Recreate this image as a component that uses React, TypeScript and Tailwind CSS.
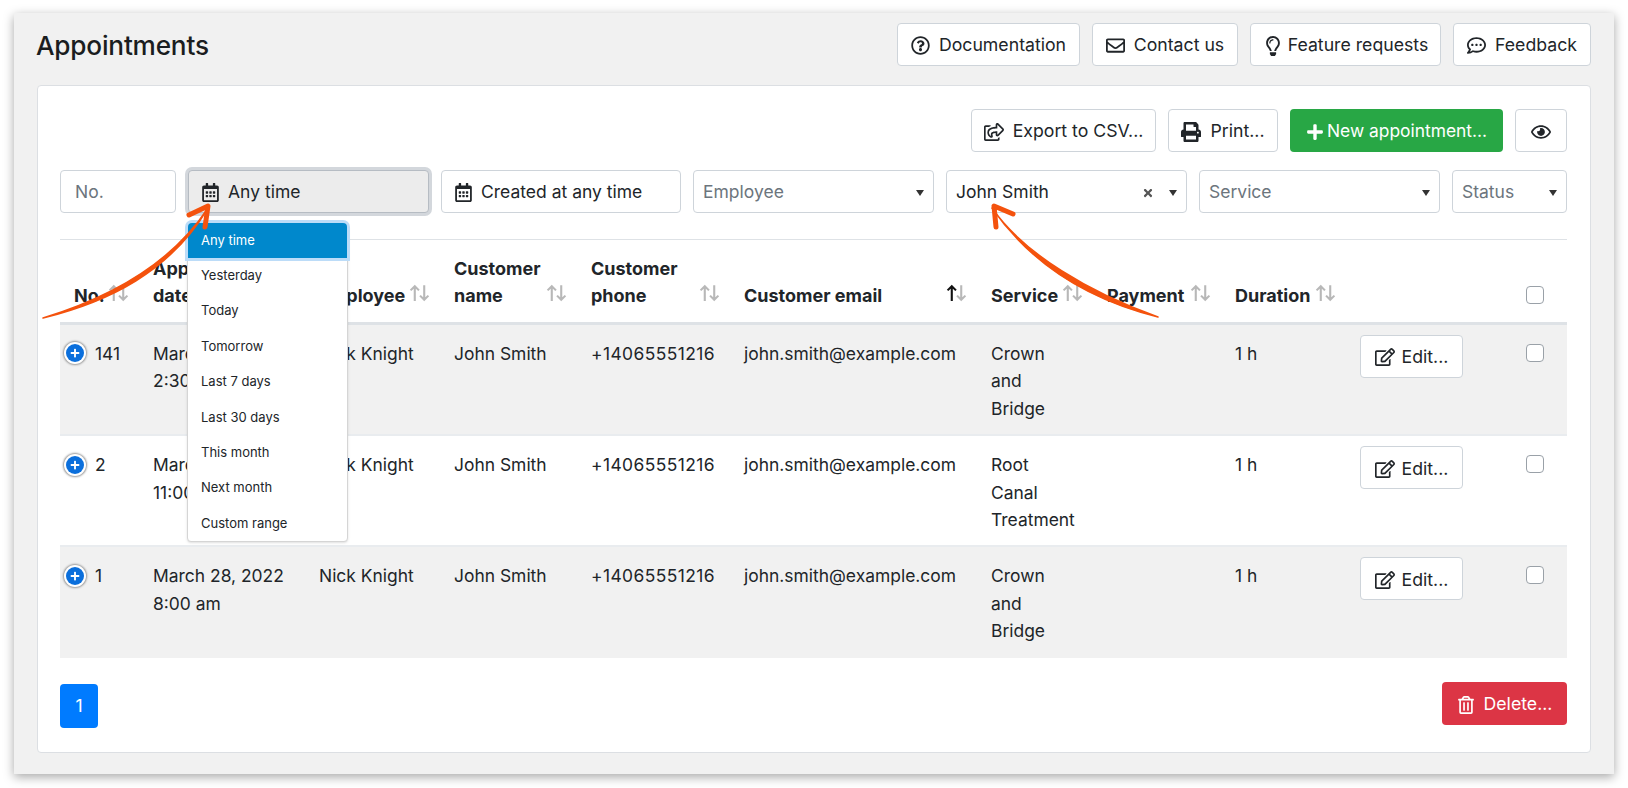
import { FaPlus, FaPrint, FaRegCalendarAlt, FaRegCommentDots, FaRegEdit, FaRegEnvelope, FaRegEye, FaRegLightbulb, FaRegQuestionCircle, FaRegShareSquare, FaRegTrashAlt, FaTimes } from "react-icons/fa";
import { type ReactNode } from "react";

const btn = "flex items-center justify-center gap-[9px] rounded-[4px] border border-[#ced4da] bg-white pt-[2px] text-[17.7px] text-[#212529]";
const select = "flex h-[43px] items-center rounded-[4px] border border-[#ced4da] bg-white pl-[9px] pr-[9px] pt-[2px] text-[17.5px]";

function SortIcon({ active }: { active?: boolean }) {
  return (
    <svg viewBox="0 0 20 17" className="mb-[8px] h-[18px] w-[21px] shrink-0" fill="none" strokeWidth="2">
      <path d="M5.5 16V2M1.5 6l4-4 4 4" stroke={active ? "#111" : "#b8b8b8"} />
      <path d="M14.5 1v14M10.5 11l4 4 4-4" stroke="#b8b8b8" />
    </svg>
  );
}

function Caret() {
  return <span className="ml-auto h-0 w-0 border-x-[4.5px] border-t-[6px] border-x-transparent border-t-[#333]" />;
}

function Th({ children, active }: { children: ReactNode; active?: boolean }) {
  return (
    <th className="pb-[12px] pl-[14px] pr-[10px] text-left align-bottom font-bold">
      <div className="flex items-end justify-between">
        <span>{children}</span>
        <SortIcon active={active} />
      </div>
    </th>
  );
}

const rows = [
  { no: "141", date: ["March 28, 2022", "2:30 pm"], service: ["Crown", "and", "Bridge"], bg: "bg-[#f1f1f1] h-[112px] border-b-2" },
  { no: "2", date: ["March 28, 2022", "11:00 am"], service: ["Root", "Canal", "Treatment"], bg: "bg-white h-[111px] border-b-2" },
  { no: "1", date: ["March 28, 2022", "8:00 am"], service: ["Crown", "and", "Bridge"], bg: "bg-[#f1f1f1] h-[112px]" },
];

const ranges = ["Yesterday", "Today", "Tomorrow", "Last 7 days", "Last 30 days", "This month", "Next month", "Custom range"];

export default function App() {
  return (
    <div className="relative h-[788px] w-[1628px] overflow-hidden bg-white pl-[14px] pt-[13px] font-['Inter','Liberation_Sans',sans-serif] text-[#212529]">
      <div className="h-[761px] w-[1600px] bg-[#f1f1f1] px-[23px] pt-[10px] shadow-[0_3px_10px_rgba(0,0,0,0.35)]">
        <div className="flex h-[43px] items-center">
          <h1 className="-ml-px pt-[2px] text-[26.2px] font-medium tracking-[-0.2px] text-[#1a1d20]">Appointments</h1>
          <div className="ml-auto flex gap-3">
            <button className={`${btn} h-[43px] w-[183px]`}><FaRegQuestionCircle className="text-[19px]" />Documentation</button>
            <button className={`${btn} h-[43px] w-[146px]`}><FaRegEnvelope className="text-[19px]" />Contact us</button>
            <button className={`${btn} h-[43px] w-[191px] !gap-[5px]`}><FaRegLightbulb className="text-[20px]" />Feature requests</button>
            <button className={`${btn} h-[43px] w-[138px]`}><FaRegCommentDots className="text-[19px]" />Feedback</button>
          </div>
        </div>

        <div className="mt-[19px] h-[668px] rounded-[4px] border border-[#dcdfe3] bg-white pl-[22px] pr-[23px] pt-[23px]">
          <div className="flex justify-end gap-3">
            <button className={`${btn} h-[43px] w-[185px]`}><FaRegShareSquare className="text-[20px]" />Export to CSV...</button>
            <button className={`${btn} h-[43px] w-[110px]`}><FaPrint className="text-[20px]" />Print...</button>
            <button className="flex h-[43px] w-[213px] items-center justify-center gap-[3px] rounded-[4px] bg-[#28a745] pt-[2px] text-[17.4px] text-white"><FaPlus className="text-[18px]" />New appointment...</button>
            <button className={`${btn} h-[43px] w-[52px]`}><FaRegEye className="text-[20px]" /></button>
          </div>

          <div className="mt-[18px] flex gap-3">
            <div className={`${select} w-[116px] !pl-[14px] text-[#6c757d]`}>No.</div>
            <div className="flex h-[43px] w-[241px] items-center gap-[8px] rounded-[4px] border border-[#b6bcc3] bg-[#ececec] px-[12px] pt-[2px] text-[17.5px] shadow-[0_0_0_3px_#d3d7dc]"><FaRegCalendarAlt className="text-[19px]" />Any time</div>
            <div className={`${select} w-[240px] gap-[8px] !pl-[12px]`}><FaRegCalendarAlt className="text-[19px]" />Created at any time</div>
            <div className={`${select} w-[241px] text-[#6c757d]`}>Employee<Caret /></div>
            <div className={`${select} w-[241px]`}>John Smith<FaTimes className="ml-auto mr-[15px] text-[12px] text-[#555]" /><span className="h-0 w-0 border-x-[4.5px] border-t-[6px] border-x-transparent border-t-[#333]" /></div>
            <div className={`${select} w-[241px] text-[#6c757d]`}>Service<Caret /></div>
            <div className={`${select} w-[115px] text-[#6c757d]`}>Status<Caret /></div>
          </div>

          <hr className="mt-[26px] border-[#dee2e6]" />

          <table className="w-[1507px] table-fixed border-collapse text-[17.45px] leading-[27.5px]">
            <colgroup>
              <col className="w-[79px]" />
              <col className="w-[166px]" />
              <col className="w-[135px]" />
              <col className="w-[137px]" />
              <col className="w-[153px]" />
              <col className="w-[247px]" />
              <col className="w-[116px]" />
              <col className="w-[128px]" />
              <col className="w-[125px]" />
              <col className="w-[221px]" />
            </colgroup>
            <thead className="text-[18px]">
              <tr className="h-[83px] border-b-[3px] border-[#dee2e6]">
                <Th>No.</Th>
                <Th>Appointment date</Th>
                <Th>Employee</Th>
                <Th>Customer name</Th>
                <Th>Customer phone</Th>
                <Th active>Customer email</Th>
                <Th>Service</Th>
                <Th>Payment</Th>
                <Th>Duration</Th>
                <th className="pb-[18px] pr-[23px] text-right align-bottom">
                  <span className="ml-auto block h-[18px] w-[18px] rounded-[4px] border border-[#9aa1a8] bg-white" />
                </th>
              </tr>
            </thead>
            <tbody>
              {rows.map((r) => (
                <tr key={r.no} className={`border-[#e9ecef] align-top ${r.bg}`}>
                  <td className="pt-[15px]">
                    <div className="flex items-center gap-[11px] pl-[6px]">
                      <span className="flex h-[18px] w-[18px] shrink-0 items-center justify-center rounded-full bg-[#0b6fdc] text-white shadow-[0_0_0_2px_#fff,0_0_2px_3px_#999]"><FaPlus className="text-[10px]" /></span>
                      {r.no}
                    </div>
                  </td>
                  <td className="px-[14px] pt-[15px]">{r.date[0]}<br />{r.date[1]}</td>
                  <td className="px-[14px] pt-[15px]">Nick Knight</td>
                  <td className="px-[14px] pt-[15px]">John Smith</td>
                  <td className="px-[14px] pt-[15px] tracking-[0.4px]">+14065551216</td>
                  <td className="px-[14px] pt-[15px]">john.smith@example.com</td>
                  <td className="px-[14px] pt-[15px]">{r.service[0]}<br />{r.service[1]}<br />{r.service[2]}</td>
                  <td />
                  <td className="px-[14px] pt-[15px]">1 h</td>
                  <td className="pl-[14px] pt-[10px]">
                    <div className="flex items-start justify-between pr-[23px]">
                      <button className={`${btn} h-[43px] w-[103px] !gap-[7px]`}><FaRegEdit className="text-[20px]" />Edit...</button>
                      <span className="mt-[9px] h-[18px] w-[18px] rounded-[4px] border border-[#9aa1a8] bg-white" />
                    </div>
                  </td>
                </tr>
              ))}
            </tbody>
          </table>

          <div className="mt-[24px] flex items-start justify-between">
            <span className="mt-[2px] flex h-[44px] w-[38px] items-center justify-center rounded-[4px] bg-[#007bff] text-[17.5px] text-white">1</span>
            <button className="flex h-[43px] w-[125px] items-center justify-center gap-[9px] rounded-[4px] bg-[#dc3545] pt-[2px] text-[17.7px] text-white"><FaRegTrashAlt className="text-[18px]" />Delete...</button>
          </div>
        </div>
      </div>

      {/* date range dropdown */}
      <div className="absolute left-[187px] top-[222px] w-[161px] rounded-[4px] border border-[#d5d5d5] bg-white text-[13px] shadow-sm">
        <div className="flex h-[35px] items-center rounded-t-[4px] bg-[#0088cc] pl-[13px] text-white shadow-[0_0_0_3px_#bcdcf8]">Any time</div>
        {ranges.map((r) => (
          <div key={r} className="flex h-[35.4px] items-center pl-[13px]">{r}</div>
        ))}
      </div>

      {/* annotation arrows */}
      <svg className="pointer-events-none absolute inset-0" width="1628" height="788" viewBox="0 0 1628 788" fill="none">
        <path d="M43 318C108 302 170 272 208 208C170 266 105 299 43 318Z" fill="#f4520d" stroke="#f4520d" strokeWidth="1.5" strokeLinejoin="round" />
        <path d="M189 215 208 206 205 227" stroke="#f4520d" strokeWidth="5" strokeLinecap="round" strokeLinejoin="round" />
        <path d="M1158 317C1086 299 1031 264 992 208C1024 254 1090 293 1158 317Z" fill="#f4520d" stroke="#f4520d" strokeWidth="1.5" strokeLinejoin="round" />
        <path d="M1013 214 994 206 996 227" stroke="#f4520d" strokeWidth="5" strokeLinecap="round" strokeLinejoin="round" />
      </svg>
    </div>
  );
}
